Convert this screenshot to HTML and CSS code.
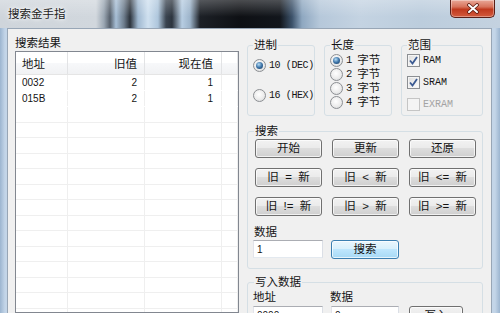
FILE: index.html
```html
<!DOCTYPE html>
<html lang="zh-CN">
<head>
    <meta charset="UTF-8">
    <title>搜索金手指</title>
    <link rel="stylesheet" href="styles.css">
</head>
<body>
    <div class="window">
        <div class="titlebar">
            <span class="title">搜索金手指</span>
            <div class="close">
                <svg width="14" height="11" viewBox="0 0 14 11">
                    <path d="M3 2 L11 9 M11 2 L3 9" stroke="#5b1a10" stroke-width="3.6" stroke-linecap="round"/>
                    <path d="M3 2 L11 9 M11 2 L3 9" stroke="#fff" stroke-width="2" stroke-linecap="round"/>
                </svg>
            </div>
        </div>

        <div class="client">
            <!-- left: result list -->
            <div class="results">
                <div class="caption">搜索结果</div>
                <div class="listview">
                    <div class="lv-head">
                        <div class="lv-cell">地址</div>
                        <div class="lv-cell num">旧值</div>
                        <div class="lv-cell num last">现在值</div>
                        <div class="lv-cell"></div>
                    </div>
                    <div class="lv-row data">
                        <div class="lv-cell">0032</div>
                        <div class="lv-cell num">2</div>
                        <div class="lv-cell num last">1</div>
                        <div class="lv-cell"></div>
                    </div>
                    <div class="lv-row data">
                        <div class="lv-cell">015B</div>
                        <div class="lv-cell num">2</div>
                        <div class="lv-cell num last">1</div>
                        <div class="lv-cell"></div>
                    </div>
                    <div class="lv-row"><div class="lv-cell"></div><div class="lv-cell"></div><div class="lv-cell"></div><div class="lv-cell"></div></div>
                    <div class="lv-row"><div class="lv-cell"></div><div class="lv-cell"></div><div class="lv-cell"></div><div class="lv-cell"></div></div>
                    <div class="lv-row"><div class="lv-cell"></div><div class="lv-cell"></div><div class="lv-cell"></div><div class="lv-cell"></div></div>
                    <div class="lv-row"><div class="lv-cell"></div><div class="lv-cell"></div><div class="lv-cell"></div><div class="lv-cell"></div></div>
                    <div class="lv-row"><div class="lv-cell"></div><div class="lv-cell"></div><div class="lv-cell"></div><div class="lv-cell"></div></div>
                    <div class="lv-row"><div class="lv-cell"></div><div class="lv-cell"></div><div class="lv-cell"></div><div class="lv-cell"></div></div>
                    <div class="lv-row"><div class="lv-cell"></div><div class="lv-cell"></div><div class="lv-cell"></div><div class="lv-cell"></div></div>
                    <div class="lv-row"><div class="lv-cell"></div><div class="lv-cell"></div><div class="lv-cell"></div><div class="lv-cell"></div></div>
                    <div class="lv-row"><div class="lv-cell"></div><div class="lv-cell"></div><div class="lv-cell"></div><div class="lv-cell"></div></div>
                    <div class="lv-row"><div class="lv-cell"></div><div class="lv-cell"></div><div class="lv-cell"></div><div class="lv-cell"></div></div>
                    <div class="lv-row"><div class="lv-cell"></div><div class="lv-cell"></div><div class="lv-cell"></div><div class="lv-cell"></div></div>
                    <div class="lv-row"><div class="lv-cell"></div><div class="lv-cell"></div><div class="lv-cell"></div><div class="lv-cell"></div></div>
                    <div class="lv-row"><div class="lv-cell"></div><div class="lv-cell"></div><div class="lv-cell"></div><div class="lv-cell"></div></div>
                    <div class="lv-row"><div class="lv-cell"></div><div class="lv-cell"></div><div class="lv-cell"></div><div class="lv-cell"></div></div>
                </div>
            </div>

            <!-- right: options -->
            <div class="controls">
                <div class="top-groups">
                    <fieldset class="group">
                        <legend>进制</legend>
                        <div class="opts base">
                            <div class="opt"><span class="radio on"></span><span class="latin">10 (DEC)</span></div>
                            <div class="opt"><span class="radio"></span><span class="latin">16 (HEX)</span></div>
                        </div>
                    </fieldset>
                    <fieldset class="group">
                        <legend>长度</legend>
                        <div class="opts size">
                            <div class="opt"><span class="radio on"></span><span class="latin">1</span>字节</div>
                            <div class="opt"><span class="radio"></span><span class="latin">2</span>字节</div>
                            <div class="opt"><span class="radio"></span><span class="latin">3</span>字节</div>
                            <div class="opt"><span class="radio"></span><span class="latin">4</span>字节</div>
                        </div>
                    </fieldset>
                    <fieldset class="group">
                        <legend>范围</legend>
                        <div class="opts range">
                            <div class="opt"><span class="check on"><svg width="11" height="11" viewBox="0 0 11 11"><path d="M2 5.5 L4.5 8.5 L9 2" fill="none" stroke="#3b5a92" stroke-width="1.8"/></svg></span><span class="latin">RAM</span></div>
                            <div class="opt"><span class="check on"><svg width="11" height="11" viewBox="0 0 11 11"><path d="M2 5.5 L4.5 8.5 L9 2" fill="none" stroke="#3b5a92" stroke-width="1.8"/></svg></span><span class="latin">SRAM</span></div>
                            <div class="opt disabled"><span class="check"></span><span class="latin">EXRAM</span></div>
                        </div>
                    </fieldset>
                </div>

                <fieldset class="group search">
                    <legend>搜索</legend>
                    <div class="btn-grid">
                        <button class="btn">开始</button>
                        <button class="btn">更新</button>
                        <button class="btn">还原</button>
                        <button class="btn">旧  =  新</button>
                        <button class="btn">旧  &lt;  新</button>
                        <button class="btn">旧  &lt;=  新</button>
                        <button class="btn">旧  !=  新</button>
                        <button class="btn">旧  &gt;  新</button>
                        <button class="btn">旧  &gt;=  新</button>
                    </div>
                    <div class="field-label">数据</div>
                    <div class="field-row">
                        <input class="textbox" type="text" value="1">
                        <button class="btn default">搜索</button>
                    </div>
                </fieldset>

                <fieldset class="group write">
                    <legend>写入数据</legend>
                    <div class="write-labels">
                        <span class="w-addr">地址</span>
                        <span>数据</span>
                    </div>
                    <div class="field-row">
                        <input class="textbox" type="text" value="0000">
                        <input class="textbox narrow" type="text" value="0">
                        <button class="btn write-btn">写入</button>
                    </div>
                </fieldset>
            </div>
        </div>
    </div>
</body>
</html>
```

FILE: styles.css
```css
* {
    box-sizing: border-box;
}
body {
    margin: 0;
    font-family: "Liberation Sans", "Noto Sans CJK SC", sans-serif;
    font-size: 11.5px;
    color: #141414;
}
.window {
    width: 500px;
    height: 313px;
    overflow: hidden;
    background: linear-gradient(to right, #9cb5d0 0, #c3d5e8 5px, #c3d5e8 495px, #9cb5d0 500px);
}

/* title bar (blurred glass) */
.titlebar {
    height: 28px;
    display: flex;
    align-items: flex-start;
    background:
        linear-gradient(to bottom, rgba(255,255,255,.25), rgba(255,255,255,0) 60%),
        linear-gradient(to right,
            #cfd5db 0, #d1d7dd 96px, #9aa6b2 104px, #56606c 110px, #a7bfd6 116px,
            #6d7c8c 124px, #2b323b 130px, #9fb8d0 138px, #cfe0ef 148px, #aec6dc 158px,
            #3a4450 166px, #2c343e 172px, #b7cde2 182px, #9db4ca 190px, #1c2026 200px,
            #0e1014 240px, #12161c 280px, #3c526a 292px, #8ea7c0 302px, #b6c8da 320px,
            #c4d3e2 360px, #bccddd 420px, #c4d2e0 500px);
}
.title {
    line-height: 28px;
    padding-left: 8px;
    color: #222;
    text-shadow: 0 0 6px #fff, 0 0 3px #fff;
}
.close {
    margin-left: auto;
    margin-right: 5px;
    width: 45px;
    height: 18px;
    border: 1px solid #5a1f18;
    border-top: none;
    border-radius: 0 0 5px 5px;
    background: linear-gradient(#e9a898, #d7735c 40%, #c0391e 55%, #d35a3d);
    box-shadow: inset 0 0 0 1px rgba(255,255,255,.35);
    display: flex;
    align-items: center;
    justify-content: center;
}

/* client area */
.client {
    height: 285px;
    margin: 0 8px 0 7px;
    background: #f0f0f0;
    border: 1px solid #98a6b6;
    border-bottom: none;
    display: flex;
    gap: 8px;
    padding: 7px 8px 0 7px;
}
.results {
    width: 224px;
    display: flex;
    flex-direction: column;
}
.caption {
    height: 15px;
    line-height: 15px;
}
.listview {
    flex: 1;
    background: #fff;
    border: 1px solid #828790;
    overflow: hidden;
}
.lv-head, .lv-row {
    display: grid;
    grid-template-columns: 52px 77px 77px 1fr;
}
.lv-head {
    height: 23px;
    border-bottom: 1px solid #e5e5e5;
    background: linear-gradient(#fff, #fff 50%, #f7f8fa 50%, #f1f2f4);
}
.lv-head .lv-cell {
    line-height: 24px;
    border-right: 1px solid #e2e3e5;
}
.lv-cell {
    padding: 0 6px;
    overflow: hidden;
    white-space: nowrap;
}
.lv-cell.num {
    text-align: right;
    padding-right: 7px;
}
.lv-cell.num.last {
    padding-right: 8px;
}
.lv-row {
    height: 15.5px;
    border-bottom: 1px solid #efefef;
}
.lv-row .lv-cell {
    border-right: 1px solid #efefef;
}
.lv-row.data {
    height: 16px;
    line-height: 16px;
    font-size: 10px;
    border-bottom-color: #fff;
}

/* right side */
.controls {
    width: 236px;
    padding-top: 1px;
}
.top-groups {
    display: grid;
    grid-template-columns: 68px 68px 82px;
    column-gap: 9px;
}
.group {
    margin: 0;
    padding: 0 0 0 5px;
    border: 1px solid #d5dfe5;
    border-radius: 3px;
    min-width: 0;
}
.group legend {
    padding: 0 1px;
    line-height: 16px;
}
.top-groups .group {
    height: 79px;
}
.opt {
    display: flex;
    align-items: center;
    white-space: nowrap;
}
.latin {
    font-family: "Liberation Mono", monospace;
    font-size: 10px;
    margin-right: 4px;
}
.base .latin {
    letter-spacing: -0.4px;
}
.base .opt {
    height: 16px;
    margin-top: 4px;
}
.base .opt + .opt {
    margin-top: 14px;
}
.size .opt {
    height: 14px;
    line-height: 14px;
}
.size .latin {
    font-size: 10.5px;
    margin-right: 5px;
}
.range {
    display: flex;
    flex-direction: column;
    gap: 8px;
}
.range .opt {
    height: 14px;
}
.radio {
    width: 13px;
    height: 13px;
    border-radius: 50%;
    border: 1px solid #8c8f93;
    background: radial-gradient(circle at 45% 40%, #fff 0, #ececec 55%, #cfd2d5 100%);
    display: inline-flex;
    align-items: center;
    justify-content: center;
    margin-right: 3px;
    flex: none;
}
.radio.on::after {
    content: "";
    width: 7px;
    height: 7px;
    border-radius: 50%;
    background: radial-gradient(circle at 40% 35%, #b5dcf5 0, #3d74a8 50%, #143556 100%);
}
.check {
    width: 13px;
    height: 13px;
    border: 1px solid #8c8f93;
    background: linear-gradient(135deg, #dcdcdc, #fff);
    box-shadow: inset 0 0 0 1px #f4f4f4;
    display: inline-flex;
    align-items: center;
    justify-content: center;
    margin-right: 3px;
    flex: none;
}
.opt.disabled {
    color: #a3a3a3;
}
.opt.disabled .check {
    border-color: #c5c5c5;
    background: #f4f4f4;
}

/* search group */
.search {
    margin-top: 7px;
    padding: 0 0 9px 6px;
}
.btn-grid {
    display: grid;
    grid-template-columns: repeat(3, 67px);
    grid-auto-rows: 19px;
    gap: 10px;
    margin-left: 1px;
}
.btn {
    height: 19px;
    padding: 0;
    font: inherit;
    color: #141414;
    line-height: 17px;
    border: 1px solid #707070;
    border-radius: 3px;
    background: linear-gradient(#f2f2f2, #ebebeb 45%, #dddddd 50%, #cfcfcf);
    box-shadow: inset 0 0 0 1px rgba(255,255,255,.7);
    white-space: pre;
}
.btn.default {
    width: 68px;
    border-color: #3c7fb1;
    background: linear-gradient(#eaf6fd, #d9f0fc 45%, #bee6fd 50%, #a7d9f5);
}
.field-label {
    margin-top: 8px;
    line-height: 16px;
}
.field-row {
    display: flex;
    align-items: flex-start;
    gap: 8px;
    margin-left: -1px;
}
.textbox {
    width: 70px;
    height: 18px;
    margin: 0;
    padding: 0 3px;
    font: 10px "Liberation Sans", sans-serif;
    color: #141414;
    background: #fff;
    border: 1px solid;
    border-color: #abadb3 #dbdfe6 #e3e9ef #e2e3ea;
}
.textbox.narrow {
    width: 68px;
}

/* write group */
.write {
    margin-top: 5px;
    padding: 0 0 8px 6px;
}
.write-labels {
    display: flex;
    line-height: 14px;
    margin-left: -1px;
}
.w-addr {
    width: 77px;
}
.write .field-row {
    margin-top: 2px;
}
.write-btn {
    width: 54px;
    margin-left: 2px;
}
```
